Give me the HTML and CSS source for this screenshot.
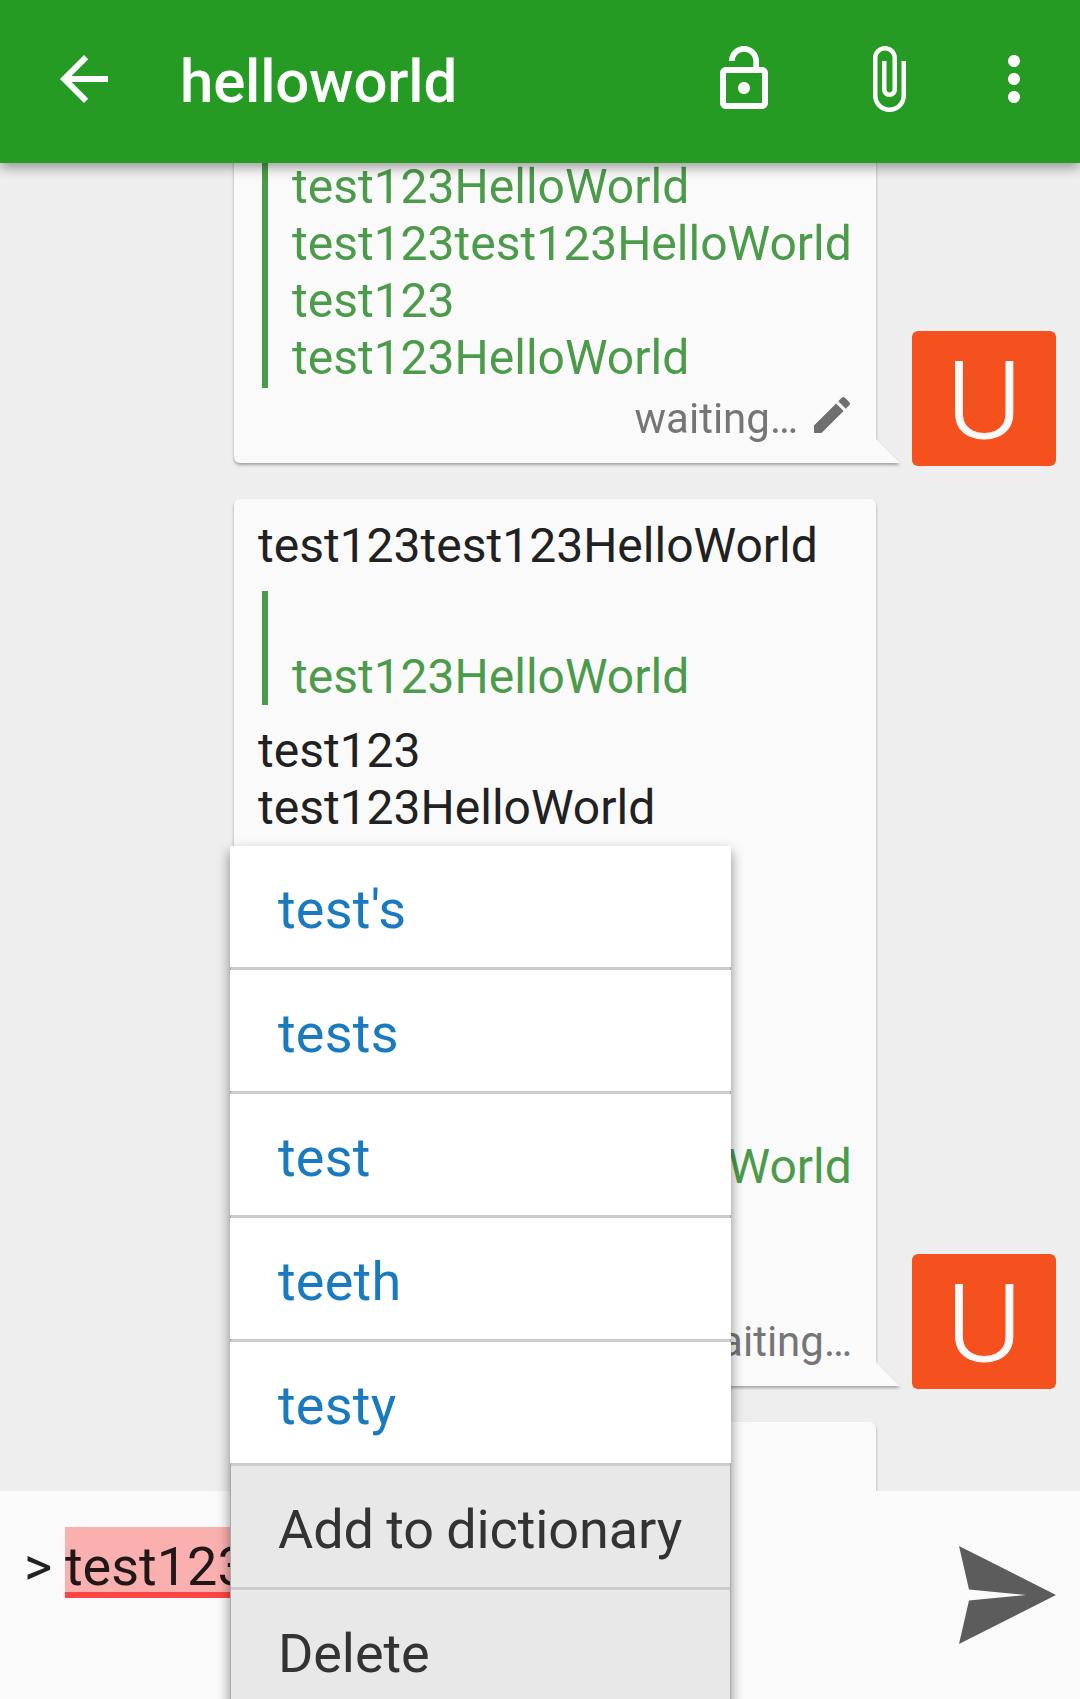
FILE: index.html
```html
<!DOCTYPE html>
<html lang="en">
<head>
<meta charset="utf-8">
<title>helloworld</title>
<link rel="stylesheet" href="styles.css">
</head>
<body>
<div class="app">
  <header class="toolbar">
    <svg class="icon back" viewBox="0 0 24 24"><path d="M20 11H7.83l5.59-5.59L12 4l-8 8 8 8 1.41-1.41L7.83 13H20v-2z"/></svg>
    <h1 class="title">helloworld</h1>
    <svg class="icon lock" viewBox="0 0 24 24"><path d="M12 17c1.1 0 2-.9 2-2s-.9-2-2-2-2 .9-2 2 .9 2 2 2zm6-9h-1V6c0-2.76-2.24-5-5-5S7 3.24 7 6h1.9c0-1.71 1.39-3.1 3.1-3.1 1.71 0 3.1 1.39 3.1 3.1v2H6c-1.1 0-2 .9-2 2v10c0 1.1.9 2 2 2h12c1.1 0 2-.9 2-2V10c0-1.1-.9-2-2-2zm0 12H6V10h12v10z"/></svg>
    <svg class="icon attach" viewBox="0 0 24 24"><path d="M16.5 6v11.5c0 2.21-1.79 4-4 4s-4-1.79-4-4V5c0-1.38 1.12-2.5 2.5-2.5s2.5 1.12 2.5 2.5v10.5c0 .55-.45 1-1 1s-1-.45-1-1V6H10v9.5c0 1.38 1.12 2.5 2.5 2.5s2.5-1.12 2.5-2.5V5c0-2.21-1.79-4-4-4S7 2.79 7 5v12.5c0 3.04 2.46 5.5 5.5 5.5s5.5-2.46 5.5-5.5V6h-1.5z"/></svg>
    <svg class="icon more" viewBox="0 0 24 24"><path d="M12 8c1.1 0 2-.9 2-2s-.9-2-2-2-2 .9-2 2 .9 2 2 2zm0 2c-1.1 0-2 .9-2 2s.9 2 2 2 2-.9 2-2-.9-2-2-2zm0 6c-1.1 0-2 .9-2 2s.9 2 2 2 2-.9 2-2-.9-2-2-2z"/></svg>
  </header>

  <main class="chat">
    <div class="messages">
      <div class="message">
        <div class="bubble">
          <blockquote class="quote"><p>test123HelloWorld<br>test123test123HelloWorld<br>test123<br>test123HelloWorld</p></blockquote>
          <div class="status">
            <span>waiting…</span>
            <svg class="edit" viewBox="0 0 24 24"><path d="M3 17.25V21h3.75L17.81 9.94l-3.75-3.75L3 17.25zM20.71 7.04c.39-.39.39-1.02 0-1.41l-2.34-2.34c-.39-.39-1.02-.39-1.41 0l-1.83 1.83 3.75 3.75 1.83-1.83z"/></svg>
          </div>
        </div>
        <div class="avatar"><span>U</span></div>
      </div>

      <div class="message">
        <div class="bubble">
          <p>test123test123HelloWorld</p>
          <blockquote class="quote inner"><p><br>test123HelloWorld</p></blockquote>
          <p>test123<br>test123HelloWorld</p>
          <blockquote class="quote long"><p><br><br><br><br><br>test123test123HelloWorld<br><br><br></p></blockquote>
          <div class="status"><span>waiting…</span></div>
        </div>
        <div class="avatar"><span>U</span></div>
      </div>

      <div class="message">
        <div class="bubble next"></div>
      </div>
    </div>
  </main>

  <footer class="composer">
    <div class="input">&gt; <mark>test123</mark></div>
    <svg class="send" viewBox="0 0 97 98"><path d="M0 0 97 49 0 98 10 54.4 67 49 10 43.6Z"/></svg>
  </footer>

  <ul class="menu">
    <li class="word">test's</li>
    <li class="word">tests</li>
    <li class="word">test</li>
    <li class="word">teeth</li>
    <li class="word">testy</li>
    <li class="action">Add to dictionary</li>
    <li class="action">Delete</li>
  </ul>
</div>
</body>
</html>
```
FILE: styles.css
```css
* { box-sizing: border-box; margin: 0; padding: 0; }

body {
  font-family: Roboto, "Liberation Sans", sans-serif;
  font-size: 48px;
  line-height: 57px;
  color: #212121;
  background: #eee;
}

.app {
  position: relative;
  display: flex;
  flex-direction: column;
  width: 1080px;
  height: 1699px;
  overflow: hidden;
}

/* Toolbar */
.toolbar {
  position: relative;
  z-index: 1;
  flex: none;
  display: flex;
  align-items: center;
  height: 163px;
  padding: 0 30px 5px 48px;
  background: #259b24;
  color: #fff;
  box-shadow: 0 4px 12px rgba(0, 0, 0, .4);
}
.icon { flex: none; width: 72px; height: 72px; fill: #fff; }
.title {
  flex: 1;
  margin-left: 60px;
  padding-top: 5px;
  font-size: 60px;
  font-weight: 500;
  letter-spacing: -.2px;
  line-height: 72px;
}
.lock { margin-right: 72px; }
.attach { margin-right: 54px; }

/* Conversation */
.chat { flex: none; height: 1328px; overflow: hidden; }
.messages { display: flex; flex-direction: column; gap: 36px; margin-top: -21px; }
.message { display: flex; align-items: flex-end; gap: 36px; padding-left: 234px; }

.bubble {
  position: relative;
  width: 642px;
  padding: 18px 24px 0;
  border-radius: 6px 6px 0 6px;
  background: #fafafa;
  filter: drop-shadow(0 2px 1.5px rgba(0, 0, 0, .32));
}
.bubble::after {
  content: "";
  position: absolute;
  left: 100%;
  bottom: 0;
  width: 24px;
  height: 24px;
  background: #fafafa;
  clip-path: polygon(0 0, 100% 100%, 0 100%);
}
.next { height: 200px; }

.quote {
  display: flow-root;
  margin: 0 0 0 4px;
  padding-left: 24px;
  border-left: 6px solid #4c9b4a;
  color: #4c9b4a;
}
.quote p { margin: -2px 0 2px; white-space: nowrap; }
.quote.inner p { margin: 0; }
p + .quote { margin-top: 17px; }
.quote + p { margin-top: 17px; }
p + .quote.long { margin-top: 19px; }

.status {
  display: flex;
  justify-content: flex-end;
  gap: 10px;
  height: 75px;
  padding-top: 3px;
  font-size: 42px;
  line-height: 49px;
  color: #757575;
}
.status span { padding-top: 3px; }
.edit { width: 48px; height: 48px; margin-right: -4px; fill: #6f6f6f; }

.avatar {
  width: 144px;
  height: 135px;
  margin-bottom: -3px;
  padding-top: 3px;
  border-radius: 6px;
  background: #f5511e;
  color: #fafafa;
  font-size: 107px;
  font-weight: 300;
  line-height: 135px;
  text-align: center;
}
.avatar span {
  display: inline-block;
  transform: scaleX(1.07);
  -webkit-text-stroke: .8px #fafafa;
}

/* Composer */
.composer {
  flex: 1;
  display: flex;
  justify-content: space-between;
  align-items: flex-start;
  padding: 36px 24px 0;
  background: #fafafa;
  font-size: 54px;
}
.input { line-height: 80px; word-spacing: -.7px; }
.input mark {
  display: inline-block;
  height: 71px;
  background: #fbb0b0;
  border-bottom: 6px solid #f44;
  color: #211717;
}
.send { width: 97px; height: 98px; margin: 18.5px .5px 0 0; fill: #5c5c5c; }

/* Suggestion popup, floating over the conversation */
.menu {
  position: absolute;
  z-index: 2;
  left: 230px;
  top: 846px;
  width: 501px;
  list-style: none;
  background: #aaa;
  font-size: 54px;
  box-shadow: 0 6px 12px rgba(0, 0, 0, .45);
}
.menu li {
  height: 124px;
  padding: 32px 0 0 48px;
  line-height: 64px;
}
.word {
  color: #1a7abf;
  letter-spacing: .2px;
  background:
    linear-gradient(#ccc, #ccc) 1px 121px / 499px 3px no-repeat,
    linear-gradient(#fff, #fff) 0 0 / 100% 121px no-repeat;
}
.action {
  color: #333;
  letter-spacing: -.1px;
  word-spacing: -1px;
  background:
    linear-gradient(#ccc, #ccc) 1px 121px / 499px 3px no-repeat,
    linear-gradient(#e8e8e8, #e8e8e8) 1px 0 / 499px 121px no-repeat;
}
```
